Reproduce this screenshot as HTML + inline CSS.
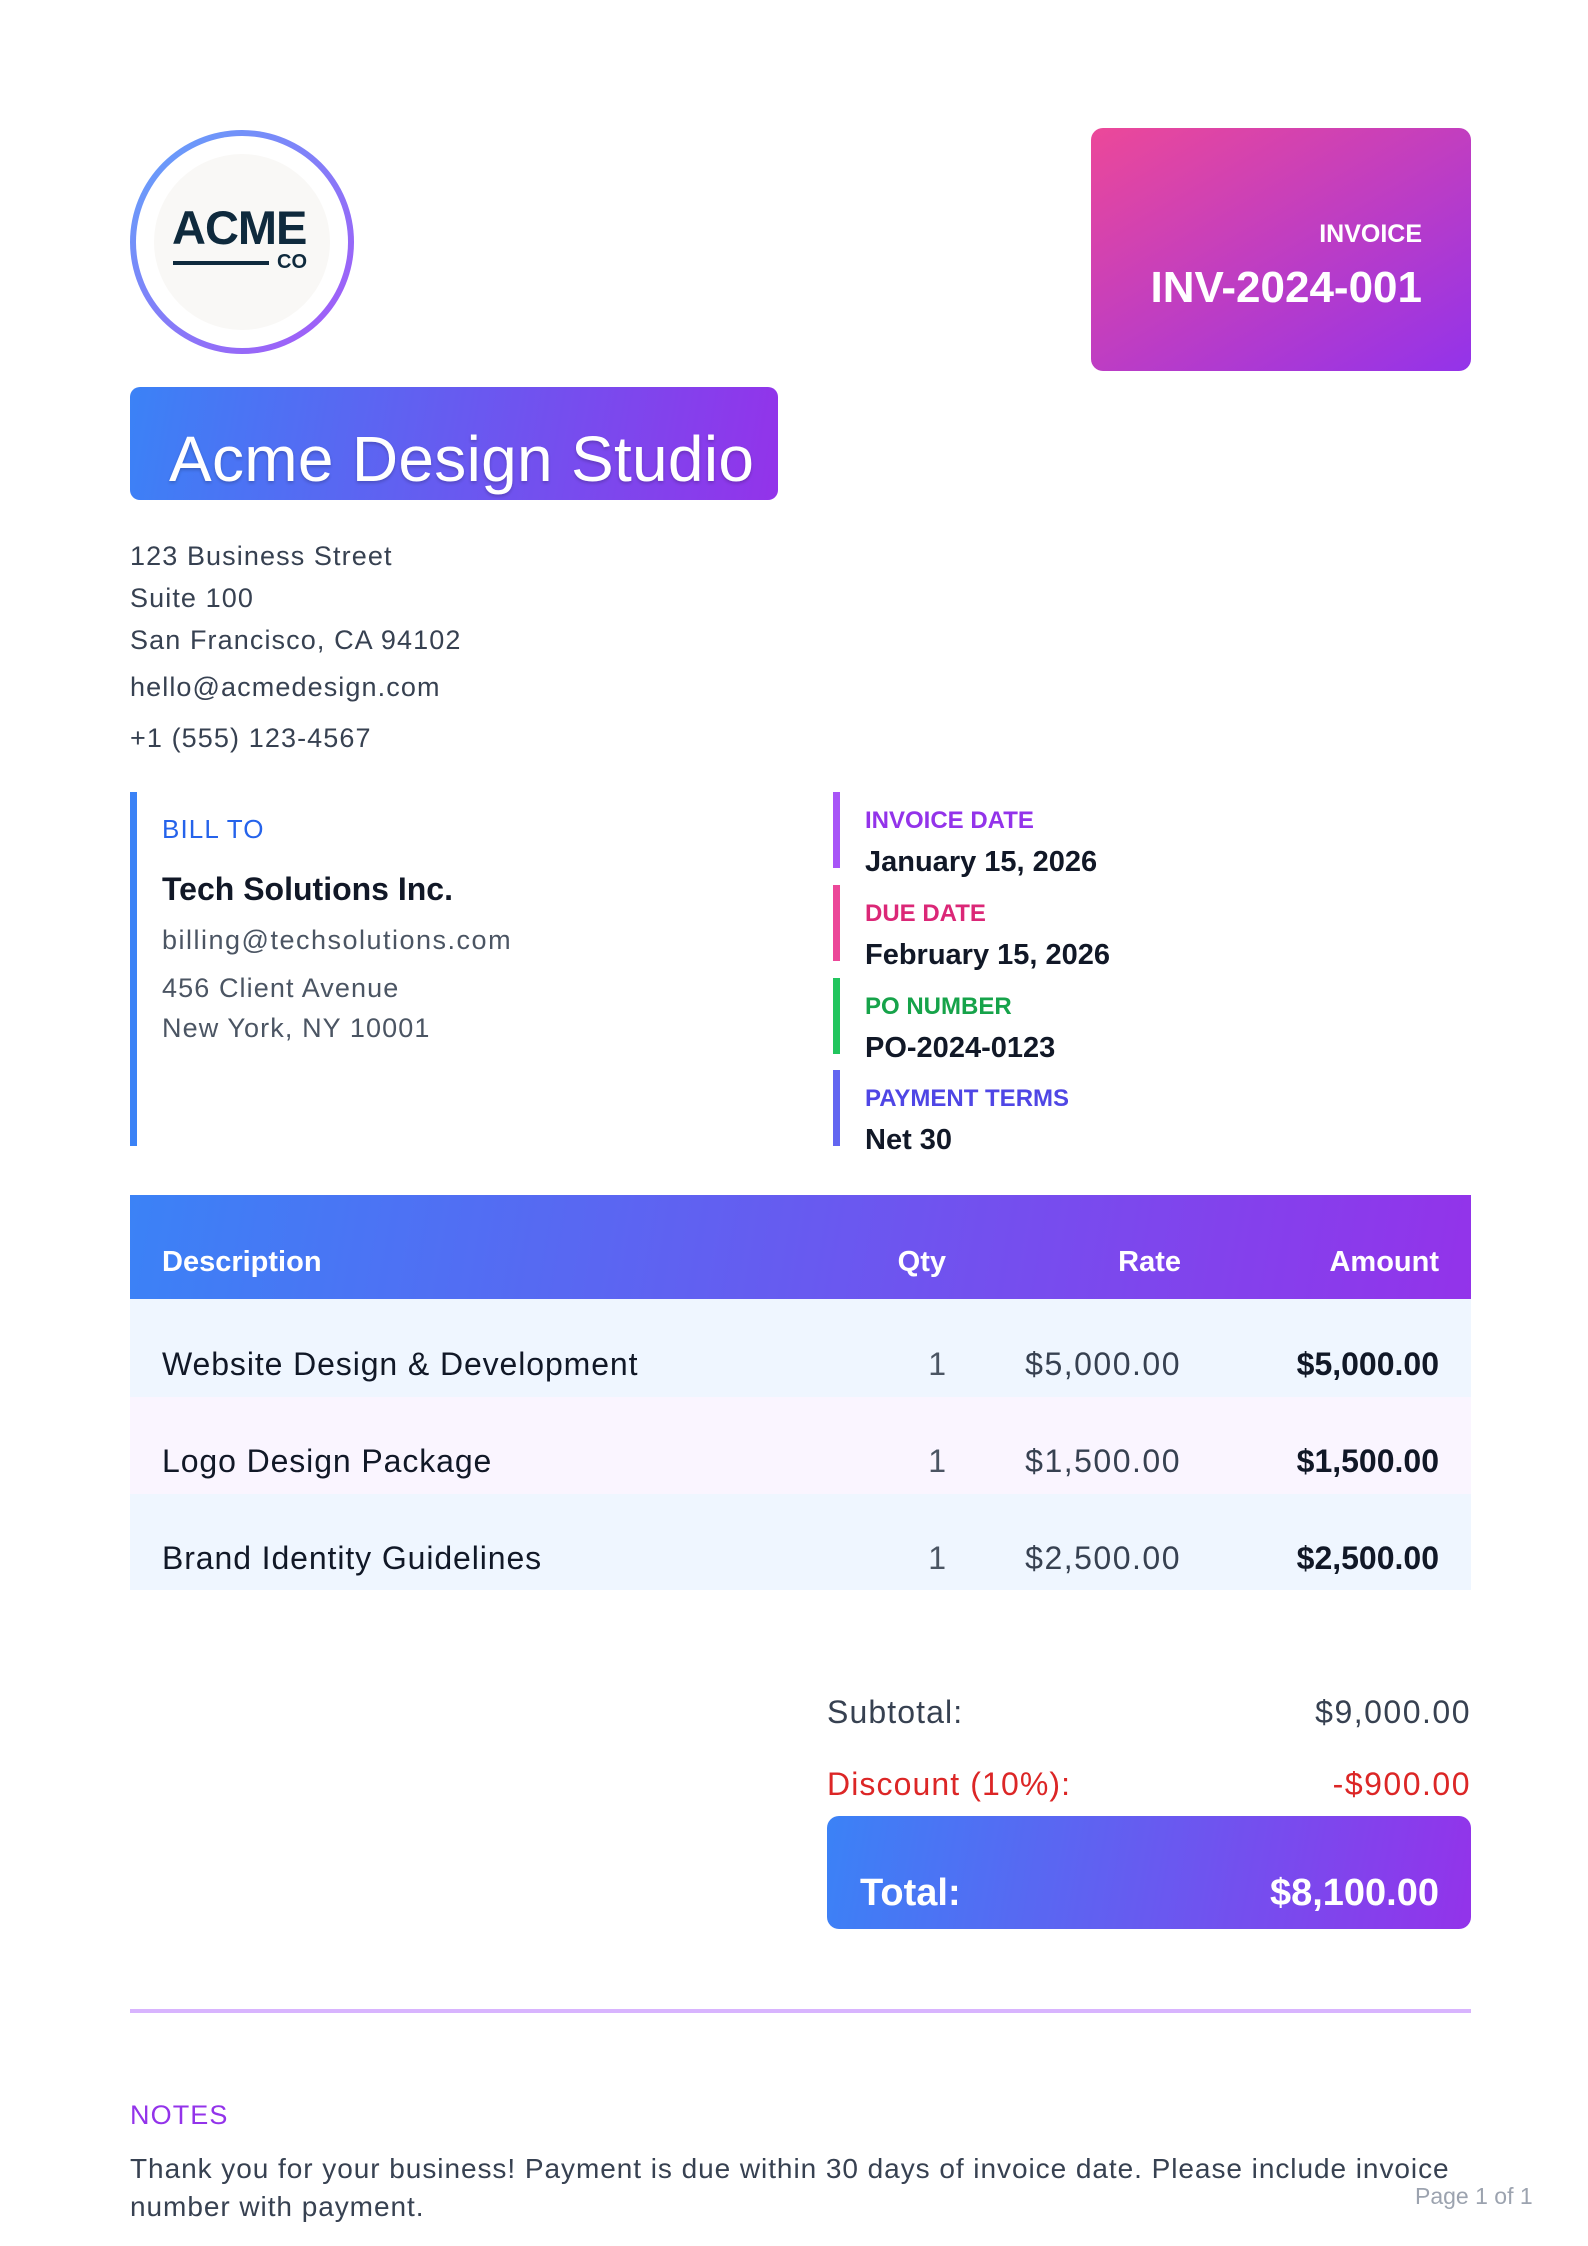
<!DOCTYPE html>
<html><head><meta charset="utf-8"><style>
*{margin:0;padding:0;box-sizing:border-box}
body{width:1588px;height:2246px;background:#fff;font-family:"Liberation Sans",sans-serif;position:relative;overflow:hidden;color:#374151}
.a{position:absolute;white-space:nowrap}
.g{background:linear-gradient(100deg,#3b82f6,#9333ea)}
.r{letter-spacing:1.1px}
.n{letter-spacing:1.5px}
</style></head><body>
<div class="a" style="left:130px;top:130px;width:224px;height:224px;border-radius:50%;background:linear-gradient(135deg,#60a5fa,#a855f7);padding:6px">
 <div style="width:100%;height:100%;border-radius:50%;background:#fff;padding:18px"><div style="width:100%;height:100%;border-radius:50%;background:#f9f8f6"></div></div>
</div>
<div class="a" style="left:172px;top:205px;font-size:47px;font-weight:bold;color:#0f2a3d;letter-spacing:-1px;line-height:46px">ACME</div>
<div class="a" style="left:173px;top:261px;width:96px;height:4px;background:#0f2a3d"></div>
<div class="a" style="left:277px;top:252px;font-size:20px;font-weight:bold;color:#0f2a3d;line-height:20px">CO</div>

<div class="a" style="left:1091px;top:128px;width:380px;height:243px;border-radius:12px;background:linear-gradient(150deg,#ec4899,#9333ea)"></div>
<div class="a" style="right:166px;top:220px;font-size:25px;font-weight:bold;color:#fff;line-height:28px">INVOICE</div>
<div class="a" style="right:166px;top:263px;font-size:44px;font-weight:bold;color:#fff;line-height:50px">INV-2024-001</div>

<div class="a g" style="left:130px;top:387px;width:648px;height:113px;border-radius:10px"></div>
<div class="a" style="left:169px;top:424px;font-size:64px;color:#fff;line-height:70px;letter-spacing:0.3px;text-shadow:0 2px 3px rgba(0,0,0,.2)">Acme Design Studio</div>

<div class="a r" style="left:130px;top:535px;font-size:27px;line-height:42px;color:#374151">123 Business Street<br>Suite 100<br>San Francisco, CA 94102</div>
<div class="a r" style="left:130px;top:669px;font-size:27px;line-height:36px">hello@acmedesign.com</div>
<div class="a r" style="left:130px;top:720px;font-size:27px;line-height:36px">+1 (555) 123-4567</div>

<div class="a" style="left:130px;top:792px;width:7px;height:354px;background:#3b82f6"></div>
<div class="a r" style="left:162px;top:815px;font-size:26px;color:#2563eb;line-height:28px">BILL TO</div>
<div class="a" style="left:162px;top:871px;font-size:32px;font-weight:bold;color:#111827;line-height:36px">Tech Solutions Inc.</div>
<div class="a" style="left:162px;top:923px;font-size:27px;line-height:34px;color:#4b5563;letter-spacing:1.5px">billing@techsolutions.com</div>
<div class="a r" style="left:162px;top:968px;font-size:27px;line-height:40px;color:#4b5563">456 Client Avenue<br>New York, NY 10001</div>

<div class="a" style="left:833px;top:792px;width:7px;height:76px;background:#a855f7"></div>
<div class="a" style="left:865px;top:808px;font-size:24px;font-weight:bold;color:#9333ea;line-height:26px">INVOICE DATE</div>
<div class="a" style="left:865px;top:846px;font-size:29px;font-weight:bold;color:#111827;line-height:32px">January 15, 2026</div>
<div class="a" style="left:833px;top:885px;width:7px;height:76px;background:#ec4899"></div>
<div class="a" style="left:865px;top:901px;font-size:24px;font-weight:bold;color:#db2777;line-height:26px">DUE DATE</div>
<div class="a" style="left:865px;top:939px;font-size:29px;font-weight:bold;color:#111827;line-height:32px">February 15, 2026</div>
<div class="a" style="left:833px;top:978px;width:7px;height:76px;background:#22c55e"></div>
<div class="a" style="left:865px;top:994px;font-size:24px;font-weight:bold;color:#16a34a;line-height:26px">PO NUMBER</div>
<div class="a" style="left:865px;top:1032px;font-size:29px;font-weight:bold;color:#111827;line-height:32px">PO-2024-0123</div>
<div class="a" style="left:833px;top:1070px;width:7px;height:76px;background:#6366f1"></div>
<div class="a" style="left:865px;top:1086px;font-size:24px;font-weight:bold;color:#4f46e5;line-height:26px">PAYMENT TERMS</div>
<div class="a" style="left:865px;top:1124px;font-size:29px;font-weight:bold;color:#111827;line-height:32px">Net 30</div>

<div class="a g" style="left:130px;top:1195px;width:1341px;height:104px"></div>
<div class="a" style="left:162px;top:1246px;font-size:29px;font-weight:bold;color:#fff;line-height:32px">Description</div>
<div class="a" style="right:642px;top:1246px;font-size:29px;font-weight:bold;color:#fff;line-height:32px">Qty</div>
<div class="a" style="right:407px;top:1246px;font-size:29px;font-weight:bold;color:#fff;line-height:32px">Rate</div>
<div class="a" style="right:149px;top:1246px;font-size:29px;font-weight:bold;color:#fff;line-height:32px">Amount</div>

<div class="a" style="left:130px;top:1299px;width:1341px;height:98px;background:#eff6ff"></div>
<div class="a" style="left:130px;top:1397px;width:1341px;height:97px;background:#faf5ff"></div>
<div class="a" style="left:130px;top:1494px;width:1341px;height:96px;background:#eff6ff"></div>

<div class="a" style="left:162px;top:1346px;font-size:32px;color:#111827;line-height:36px;letter-spacing:0.9px">Website Design &amp; Development</div>
<div class="a" style="right:642px;top:1346px;font-size:32px;color:#4b5563;line-height:36px">1</div>
<div class="a n" style="right:407px;top:1346px;font-size:32px;color:#374151;line-height:36px">$5,000.00</div>
<div class="a" style="right:149px;top:1346px;font-size:32px;font-weight:bold;color:#111827;line-height:36px">$5,000.00</div>

<div class="a" style="left:162px;top:1443px;font-size:32px;color:#111827;line-height:36px;letter-spacing:0.9px">Logo Design Package</div>
<div class="a" style="right:642px;top:1443px;font-size:32px;color:#4b5563;line-height:36px">1</div>
<div class="a n" style="right:407px;top:1443px;font-size:32px;color:#374151;line-height:36px">$1,500.00</div>
<div class="a" style="right:149px;top:1443px;font-size:32px;font-weight:bold;color:#111827;line-height:36px">$1,500.00</div>

<div class="a" style="left:162px;top:1540px;font-size:32px;color:#111827;line-height:36px;letter-spacing:0.9px">Brand Identity Guidelines</div>
<div class="a" style="right:642px;top:1540px;font-size:32px;color:#4b5563;line-height:36px">1</div>
<div class="a n" style="right:407px;top:1540px;font-size:32px;color:#374151;line-height:36px">$2,500.00</div>
<div class="a" style="right:149px;top:1540px;font-size:32px;font-weight:bold;color:#111827;line-height:36px">$2,500.00</div>

<div class="a r" style="left:827px;top:1694px;font-size:32px;color:#374151;line-height:36px">Subtotal:</div>
<div class="a n" style="right:117px;top:1694px;font-size:32px;color:#374151;line-height:36px">$9,000.00</div>
<div class="a r" style="left:827px;top:1766px;font-size:32px;color:#dc2626;line-height:36px">Discount (10%):</div>
<div class="a n" style="right:117px;top:1766px;font-size:32px;color:#dc2626;line-height:36px">-$900.00</div>
<div class="a g" style="left:827px;top:1816px;width:644px;height:113px;border-radius:12px"></div>
<div class="a" style="left:860px;top:1872px;font-size:38px;font-weight:bold;color:#fff;line-height:42px">Total:</div>
<div class="a" style="right:149px;top:1872px;font-size:38px;font-weight:bold;color:#fff;line-height:42px">$8,100.00</div>

<div class="a" style="left:130px;top:2009px;width:1341px;height:4px;background:#d8b4fe"></div>
<div class="a r" style="left:130px;top:2100px;font-size:27px;color:#9333ea;line-height:30px">NOTES</div>
<div class="a" style="left:130px;top:2150px;font-size:28px;color:#374151;line-height:38px;letter-spacing:0.95px">Thank you for your business! Payment is due within 30 days of invoice date. Please include invoice<br>number with payment.</div>
<div class="a" style="left:1415px;top:2183px;font-size:23px;color:#9ca3af;line-height:26px">Page 1 of 1</div>
</body></html>
